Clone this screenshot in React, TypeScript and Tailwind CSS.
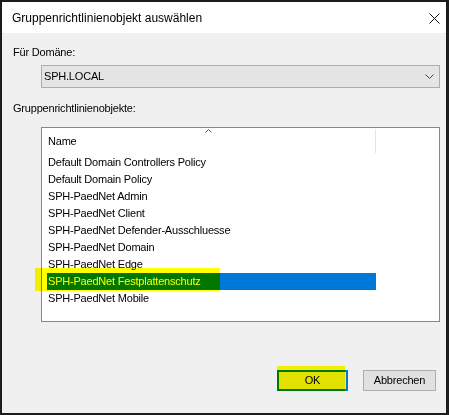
import React from "react";

const rows = [
  "Default Domain Controllers Policy",
  "Default Domain Policy",
  "SPH-PaedNet Admin",
  "SPH-PaedNet Client",
  "SPH-PaedNet Defender-Ausschluesse",
  "SPH-PaedNet Domain",
  "SPH-PaedNet Edge",
  "SPH-PaedNet Festplattenschutz",
  "SPH-PaedNet Mobile",
];

export default function App() {
  return (
    <div
      className="relative h-[415px] w-[449px] bg-[#1c1c1c] pb-[2px] pl-[2px] pr-[3px] pt-[2px] text-[11px] tracking-[-0.2px] text-black"
      style={{ fontFamily: '"Liberation Sans", Arial, sans-serif' }}
    >
      <div className="flex h-full flex-col bg-[#f0f0f0]">
        <div className="flex h-[31px] items-center justify-between bg-white pl-[10px] pr-[6px]">
          <span className="text-[12px] tracking-normal">Gruppenrichtlinienobjekt auswählen</span>
          <svg width="11" height="11" viewBox="0 0 11 11" className="mt-[1px]">
            <path d="M0.5 0.5 L10.5 10.5 M10.5 0.5 L0.5 10.5" stroke="#111" strokeWidth="1" fill="none" />
          </svg>
        </div>
        <div className="flex flex-1 flex-col pl-[11px]">
          <div className="mt-[11px] h-[16px] leading-[16px]">Für Domäne:</div>
          <div className="ml-[28px] mt-[5px] flex h-[23px] w-[399px] items-center justify-between border border-[#adadad] bg-[#e5e5e5] pl-[2px] pr-[5px]">
            <span>SPH.LOCAL</span>
            <svg width="9" height="5" viewBox="0 0 9 5">
              <path d="M0.5 0.5 L4.5 4.5 L8.5 0.5" stroke="#444" strokeWidth="1" fill="none" />
            </svg>
          </div>
          <div className="mt-[12px] h-[16px] leading-[16px]">Gruppenrichtlinienobjekte:</div>
          <div className="ml-[28px] mt-[11px] h-[195px] w-[399px] border border-[#828790] bg-white">
            <div className="relative flex h-[26px]">
              <div className="flex w-[333px] items-center pl-[6px] pt-[1px]">Name</div>
              <div className="mt-[1px] h-[24px] w-[1px] bg-[#e5e5e5]" />
              <svg width="7" height="4" viewBox="0 0 7 4" className="absolute left-[163px] top-[1px]">
                <path d="M0.5 3.5 L3.5 0.5 L6.5 3.5" stroke="#555" strokeWidth="1" fill="none" />
              </svg>
            </div>
            <div className="flex flex-col">
              {rows.map((r, i) => (
                <div
                  key={r}
                  className={
                    i === 7
                      ? "ml-[5px] flex h-[17px] w-[329px] items-center bg-[#0078d7] pl-[1px] text-white"
                      : "ml-[5px] flex h-[17px] w-[329px] items-center pl-[1px]"
                  }
                >
                  {r}
                </div>
              ))}
            </div>
          </div>
          <div className="mt-[48px] flex justify-end gap-[15px] pr-[10px]">
            <button className="flex h-[21px] w-[71px] items-center justify-center border-2 border-[#0078d7] bg-[#e1e1e1]">
              OK
            </button>
            <button className="flex h-[21px] w-[73px] items-center justify-center border border-[#adadad] bg-[#e1e1e1]">
              Abbrechen
            </button>
          </div>
        </div>
      </div>
      <div className="pointer-events-none absolute left-[35px] top-[268px] h-[23px] w-[185px] bg-[#ffff00] mix-blend-multiply" />
      <div className="pointer-events-none absolute left-[277px] top-[366px] h-[25px] w-[68px] bg-[#ffff00] mix-blend-multiply" />
    </div>
  );
}
